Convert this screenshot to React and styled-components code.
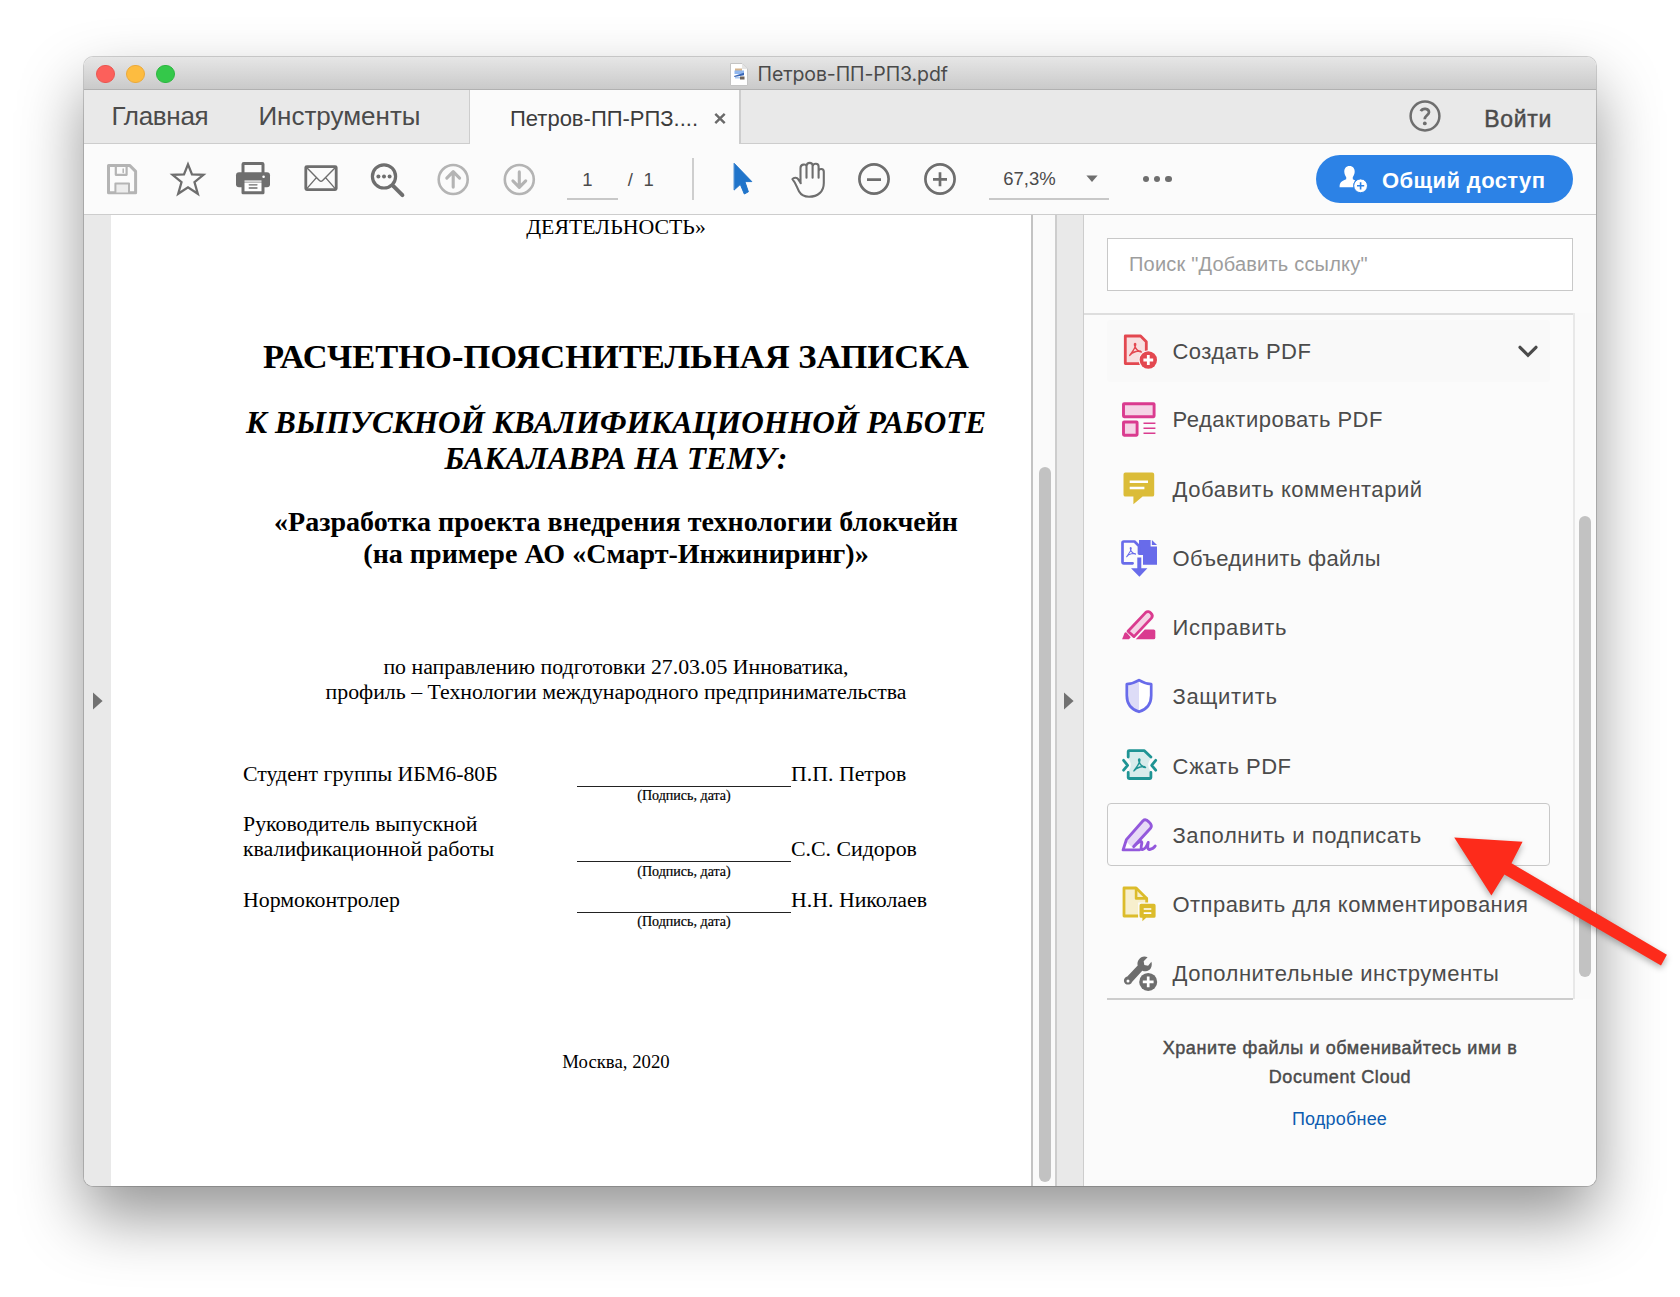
import React from 'react';
import styled, { createGlobalStyle, css } from 'styled-components';

const ink = '#4b4b4b';
const iconGray = '#6e6e6e';
const iconMuted = '#b4b4b4';
const hairline = '#cdcdcd';
const surface = '#fbfbfb';
const chrome = '#e9e9e9';

const GlobalStyle = createGlobalStyle`
  *, *::before, *::after { box-sizing: border-box; }
  html, body { margin: 0; padding: 0; background: #fff; }
  body {
    font-family: "Liberation Sans", Arial, sans-serif;
    color: ${ink};
    overflow: hidden;
  }
  svg { display: block; flex: none; overflow: visible; }
`;

const Desktop = styled.div`
  position: relative;
  width: 1680px;
  height: 1297px;
  padding: 57px 84px 0;
  background: #fff;
  overflow: hidden;
`;

const Window = styled.div`
  width: 1512px;
  height: 1129px;
  display: flex;
  flex-direction: column;
  border-radius: 9px;
  overflow: hidden;
  background: ${surface};
  box-shadow: 0 0 0 1px rgba(0, 0, 0, 0.17), 0 31px 64px rgba(0, 0, 0, 0.42);
`;

const TitleBar = styled.header`
  display: grid;
  grid-template-columns: 646px auto 1fr;
  align-items: center;
  height: 33px;
  flex: none;
  background: linear-gradient(#e6e6e6, #cacaca);
  border-bottom: 1px solid #b1b1b1;
`;

const Lights = styled.div`
  display: flex;
  gap: 11.4px;
  padding-left: 12px;
  padding-top: 1px;
`;

const Light = styled.span`
  width: 18.7px;
  height: 18.7px;
  border-radius: 50%;
  background: ${(p) => p.$fill};
  border: 1px solid ${(p) => p.$edge};
`;

const WindowTitle = styled.div`
  display: flex;
  align-items: center;
  gap: 9.5px;
  font: 400 19.5px/32px Inter, "Liberation Sans", sans-serif;
  letter-spacing: -0.1px;
  color: #4a4a4a;
  white-space: nowrap;
  padding-top: 1px;
`;

const TabBar = styled.nav`
  display: flex;
  flex: none;
  height: 54px;
  background: ${chrome};
`;

const MainTabs = styled.div`
  display: flex;
  width: 385px;
  gap: 50px;
  padding-left: 27.5px;
  border-bottom: 1px solid ${hairline};
  font-size: 26px;
  line-height: 53px;
`;

const MainTab = styled.span`
  white-space: nowrap;
  letter-spacing: ${(p) => p.$track}px;
`;

const FileTab = styled.div`
  display: flex;
  align-items: center;
  justify-content: space-between;
  width: 272px;
  padding: 4px 13px 0 40px;
  background: ${surface};
  border-left: 1px solid ${hairline};
  border-right: 2px solid ${hairline};
  font-size: 22px;
  color: #3c3c3c;
  white-space: nowrap;
`;

const TabTail = styled.div`
  flex: 1;
  display: flex;
  align-items: center;
  justify-content: flex-end;
  gap: 43px;
  padding: 0 44px 2px 0;
  border-bottom: 1px solid ${hairline};
`;

const SignIn = styled.span`
  font-size: 23px;
  letter-spacing: 0.7px;
  padding-top: 7px;
  -webkit-text-stroke: 0.45px currentColor;
`;

const Toolbar = styled.div`
  display: flex;
  align-items: center;
  flex: none;
  height: 71px;
  padding-left: 5px;
  padding-right: 23px;
  background: ${surface};
  border-bottom: 1px solid ${hairline};
`;

const Slots = styled.div`
  display: grid;
  grid-auto-flow: column;
  grid-auto-columns: ${(p) => p.$pitch}px;
  justify-items: center;
`;

const underlined = css`
  height: 42px;
  border-bottom: 2px solid #c8c8c8;
  line-height: 44.5px;
  font-size: 18.5px;
`;

const PageField = styled.div`
  ${underlined};
  width: 51px;
  margin-left: 15px;
  padding-left: 15px;
`;

const PageCount = styled.div`
  width: 65.5px;
  height: 42px;
  line-height: 44.5px;
  padding-left: 9.5px;
  font-size: 18.5px;
  word-spacing: 5.5px;
`;

const Separator = styled.div`
  width: 2px;
  height: 42px;
  margin: 0 16.5px 0 8px;
  background: #cecece;
`;

const ZoomField = styled.div`
  ${underlined};
  display: flex;
  align-items: center;
  justify-content: space-between;
  width: 120px;
  margin-left: 16.5px;
  padding: 0 11px 0 14px;
`;

const ZoomValue = styled.span`
  padding-top: 3px;
`;

const MoreDots = styled.div`
  display: flex;
  gap: 5px;
  margin-left: 33.5px;
`;

const Dot = styled.span`
  width: 6.4px;
  height: 6.4px;
  border-radius: 50%;
  background: ${iconGray};
`;

const ShareButton = styled.button`
  display: flex;
  align-items: center;
  gap: 14px;
  width: 257px;
  height: 48px;
  margin-left: auto;
  padding: 0 0 0 23px;
  border: 0;
  border-radius: 24px;
  background: #2c82e6;
  color: #fff;
  font: 700 22px/50px "Liberation Sans", Arial, sans-serif;
  letter-spacing: 0.4px;
  white-space: nowrap;
`;

const ShareLabel = styled.span`
  padding-top: 3px;
`;

const Body = styled.main`
  display: flex;
  flex: 1;
  min-height: 0;
`;

const PaneHandle = styled.div`
  display: flex;
  align-items: center;
  width: ${(p) => p.$w}px;
  padding-left: ${(p) => p.$pad}px;
  background: ${chrome};
  border-left: ${(p) => (p.$edges ? `2px solid ${hairline}` : '0')};
  border-right: ${(p) => (p.$edges ? `1px solid ${hairline}` : '0')};
`;

const Page = styled.article`
  width: 922px;
  flex: none;
  background: #fff;
  border-right: 2px solid #c3c3c3;
  color: #000;
  font-family: "Liberation Serif", "Times New Roman", serif;
  overflow: hidden;
`;

const Sheet = styled.div`
  width: 1010px;
  text-align: center;
`;

const Para = styled.p`
  margin: ${(p) => p.$top}px 0 0;
  font-size: ${(p) => p.$size}px;
  line-height: ${(p) => p.$line}px;
  font-weight: ${(p) => (p.$bold ? 700 : 400)};
  font-style: ${(p) => (p.$italic ? 'italic' : 'normal')};
  white-space: nowrap;
`;

const Signatures = styled.div`
  display: flex;
  flex-direction: column;
  gap: 8.6px;
  margin: 57px 0 0 132px;
  text-align: left;
  font-size: 21.83px;
  line-height: 25px;
  white-space: nowrap;
`;

const SignatureRow = styled.div`
  display: grid;
  grid-template-columns: 334px 214px auto;
  align-items: end;
`;

const SignLine = styled.span`
  align-self: end;
  border-bottom: 1px solid #222;
`;

const SignHint = styled.span`
  grid-column: 2;
  font-size: 14.05px;
  line-height: 16px;
  padding: 0.4px 0 0.6px;
  text-align: center;
  -webkit-text-stroke: 0.2px currentColor;
`;

const ScrollTrack = styled.div`
  flex: none;
  width: ${(p) => p.$w}px;
  padding: ${(p) => p.$from}px 0 0 ${(p) => p.$inset}px;
  background: #fafafa;
  border-left: ${(p) => (p.$line ? '2px solid #e8e8e8' : '0')};
`;

const ScrollThumb = styled.div`
  width: 12px;
  height: ${(p) => p.$h}px;
  border-radius: 6px;
  background: #c2c2c2;
`;

const ToolPane = styled.aside`
  display: flex;
  flex-direction: column;
  width: 512px;
  background: ${surface};
`;

const SearchBox = styled.div`
  height: 53px;
  margin: 23px 23px 22px 23px;
  padding-left: 21px;
  border: 1px solid #c8c8c8;
  background: #fff;
  color: #9d9d9d;
  font-size: 20px;
  line-height: 51px;
  letter-spacing: 0.2px;
  white-space: nowrap;
`;

const ToolArea = styled.div`
  display: flex;
  flex: none;
  height: 686px;
`;

const ToolList = styled.div`
  width: 489px;
  padding: 5px 0 0 23px;
  border-top: 2px solid #dedede;
  overflow: hidden;
`;

const ToolRow = styled.div`
  display: flex;
  align-items: center;
  width: 443px;
  height: 62.4px;
  margin-bottom: ${(p) => (p.$first ? 5.6 : 6.85)}px;
  padding: 0 10.5px 0 9px;
  border: 1px solid ${(p) => (p.$active ? '#c8c8c8' : 'transparent')};
  border-radius: 4px;
  background: ${(p) => (p.$first ? '#f9f9f9' : 'transparent')};
`;

const ToolName = styled.span`
  flex: 1;
  padding: 2.6px 0 0 11.5px;
  font-size: 22px;
  letter-spacing: ${(p) => p.$track}px;
  white-space: nowrap;
`;

const ListEnd = styled.div`
  flex: none;
  height: 1px;
  margin: -1px 23px 0 23px;
  border-top: 2px solid ${hairline};
`;

const Promo = styled.p`
  margin: 34px 0 0;
  text-align: center;
  font-size: 18px;
  line-height: 28.6px;
  letter-spacing: 0.6px;
  -webkit-text-stroke: 0.45px currentColor;
`;

const PromoLink = styled.a`
  margin: 13.5px 1px 0 0;
  text-align: center;
  font-size: 18px;
  line-height: 28px;
  letter-spacing: 0.2px;
  color: #0d5cb0;
`;

const Pointer = styled.svg`
  position: absolute;
  left: 1450px;
  top: 830px;
  filter: drop-shadow(0 3px 3px rgba(0, 0, 0, 0.3));
`;

const Glyph = ({ children, size = 44 }) => (
  <svg width={size} height={size} viewBox={`${-size / 2} ${-size / 2} ${size} ${size}`} fill="none" strokeLinecap="round" strokeLinejoin="round">
    {children}
  </svg>
);

const SaveIcon = () => (
  <Glyph>
    <path d="M-13.5-13.6H7.6l6 6V13.8H-13.5z" stroke={iconMuted} strokeWidth="3" />
    <path d="M-6.2-13V-4.2H4.6V-13" stroke={iconMuted} strokeWidth="2.2" />
    <path d="M1.2-10v3.4" stroke={iconMuted} strokeWidth="1.5" />
    <path d="M-6.6 13.6V4.4H7v9.2" stroke={iconMuted} strokeWidth="2" fill="#ececec" />
  </Glyph>
);

const StarIcon = () => (
  <Glyph>
    <path d="M0-14.6 4-4.6 15.4-4.2 6.5 3.2 9.8 14.8 0 8.3-9.8 14.8-6.5 3.2-15.4-4.2-4-4.6z" stroke={iconGray} strokeWidth="2.3" strokeLinejoin="miter" />
  </Glyph>
);

const PrintIcon = () => (
  <Glyph>
    <g transform="translate(-1 0)">
      <path d="M-10-6v-8.8q0-.7.7-.7H9.3q.7 0 .7.7V-6" stroke={iconGray} strokeWidth="3" />
      <rect x="-17" y="-6.8" width="34" height="15" rx="3" fill={iconGray} />
      <path d="M-10 2.4H10V13.8H-10z" fill="#fff" stroke={iconGray} strokeWidth="3" />
      <path d="M-8.5 2.5H8.5" stroke="#d8d8d8" strokeWidth="2.6" strokeLinecap="butt" />
      <path d="M-3.8 5.8H4M-3.8 9H4" stroke={iconGray} strokeWidth="1.3" />
      <circle cx="10.6" cy="-2.2" r="1.3" fill="#fff" />
    </g>
  </Glyph>
);

const MailIcon = () => (
  <Glyph>
    <g transform="translate(0 -.6)">
      <rect x="-15.2" y="-11.8" width="30.4" height="23" rx="1" stroke={iconGray} strokeWidth="2.8" />
      <path d="M-14.4-11-1.6 2Q0 3.6 1.6 2L14.4-11M-14.4 10.5-4.6-.8M14.4 10.5 4.6-.8" stroke={iconGray} strokeWidth="1.4" />
    </g>
  </Glyph>
);

const FindIcon = () => (
  <Glyph>
    <circle cx="-3" cy="-2.6" r="11.6" stroke={iconGray} strokeWidth="3.2" />
    <path d="m6.4 7.2 9 9" stroke={iconGray} strokeWidth="4" />
    <g fill={iconGray}>
      <circle cx="-8.6" cy="-2.6" r="2" />
      <circle cx="-3" cy="-2.6" r="2" />
      <circle cx="2.6" cy="-2.6" r="2" />
    </g>
  </Glyph>
);

const ArrowIcon = ({ down }) => (
  <Glyph>
    <g stroke={iconMuted} transform={down ? 'translate(.3 .5) scale(1 -1)' : 'translate(.2 .5)'}>
      <circle r="14.5" strokeWidth="2.6" />
      <path d="M0 7.6V-7.4M-6.4-1.4 0-7.8 6.4-1.4" strokeWidth="3.1" />
    </g>
  </Glyph>
);

const CursorIcon = () => (
  <Glyph>
    <path d="M-8.6-15.4 8.8 2.6H1.9L5.4 12.8 1.3 15-2.7 5.4-8.6 10.8z" fill="#2074ca" stroke="#2074ca" strokeWidth="1" />
  </Glyph>
);

const HandIcon = () => (
  <Glyph>
    <path
      transform="translate(-.6 .3)"
      d="M-7.6 3.8-10.3-.2C-11.6-2.2-14.8-1.6-16-.2-12.6 3.6-11.6 8-9.3 12.2-7 16.2-3.2 17.4.6 17.4 9.4 17.4 15.4 12.4 15.4 3.6V-7.6C15.4-11 10.6-11 10.2-8.2V-12.8C10.2-16.4 5-16.4 4.4-13.4 4-17.4-1.4-17.4-1.9-13.4-2.7-15.6-7.9-15.2-7.9-11.4V3.8M-1.9-13.4V-1.6M4.2-13.6V-1.6M10.2-8.4V-1.6"
      stroke={iconGray}
      strokeWidth="2.1"
    />
  </Glyph>
);

const ZoomIcon = ({ plus }) => (
  <Glyph>
    <circle r="14.6" stroke={iconGray} strokeWidth="2.7" />
    <path d={plus ? 'M-7 .3H7M0-6.7V7.3' : 'M-7 .6H7'} stroke={iconGray} strokeWidth="2.7" strokeLinecap="butt" />
  </Glyph>
);

const HelpIcon = () => (
  <Glyph size={32}>
    <circle r="14.4" stroke={iconGray} strokeWidth="2.5" />
    <path d="M-4.2-4.9C-2.6-8.2 4.1-8 4-3.7 3.9-.9-.3-.4-.3 3.2" stroke={iconGray} strokeWidth="2.7" strokeLinecap="butt" />
    <circle cx="-.2" cy="7.4" r="1.9" fill={iconGray} />
  </Glyph>
);

const PersonIcon = () => (
  <svg width="29" height="28" viewBox="0 0 29 28">
    <path transform="translate(0 .5)" d="M10.5.4C14 .4 16 3 15.7 6.6c-.2 2.4-1.2 4-1.9 5v2.2l2.4 1.2c-1.6 1.7-2.1 4-1.5 6.8H.6c0-5 1.4-5.6 6.6-8v-2.2C6.4 10.6 5.5 9 5.3 6.6 5 3 7 .4 10.5.4z" fill="#fff" />
    <circle cx="21.6" cy="20.8" r="6.9" fill="#fff" stroke="#2c82e6" strokeWidth="1" />
    <path d="M21.6 17.2V24.4M18 20.8h7.2" stroke="#2c82e6" strokeWidth="1.6" />
  </svg>
);

const FileIcon = () => (
  <svg width="18" height="23" viewBox="0 0 18 23">
    <path d="M.5.5H12L17.5 6V22.5H.5z" fill="#fff" stroke="#c4c4c4" />
    <path d="M12 .5V6h5.5z" fill="#e4e4e4" />
    <path d="M5 5.5H12V8H5z" fill="#d3b48e" />
    <path d="M4.5 7.5H14v3.5H4.5z" fill="#8fb6ee" />
    <path d="M4 13 14 9.8v2.4L4.5 14z" fill="#3865b5" />
    <path d="M5 14h6v1.6H5z" fill="#a9c8f2" />
    <path d="M10 13.6h4.5v3H10z" fill="#6e6259" />
  </svg>
);

const Acro = ({ color, x = 0, y = 0, k = 1 }) => (
  <path
    transform={`translate(${x} ${y}) scale(${k})`}
    d="M-6 6.3C-4.5 3.6 0-.6.3-5.2.4-7-1.3-6.8-1-4.8-.5-1.8 2.6 2.4 6.3 2.7 5 .6-3.6 2-6 6.3z"
    stroke={color}
    strokeWidth="1.5"
  />
);

const CreateIcon = () => (
  <Glyph>
    <path d="M-13.7-15H1.6L7.3-9.3V12.6H-13.7z" fill="#f8dfe0" stroke="#e34850" strokeWidth="2.8" />
    <Acro color="#e34850" x={-3.6} y={-1.5} k={0.95} />
    <circle cx="9.3" cy="9" r="9.7" fill={surface} />
    <circle cx="9.3" cy="9" r="8.7" fill="#e34850" />
    <path d="M4.4 9h9.8M9.3 4.1v9.8" stroke="#fff" strokeWidth="2.8" strokeLinecap="butt" />
  </Glyph>
);

const EditIcon = () => (
  <Glyph>
    <g fill="#f5d4e6" stroke="#da3b8f" strokeWidth="2.9">
      <rect x="-15.5" y="-15.3" width="30.6" height="13" rx=".6" />
      <rect x="-15.5" y="3" width="13.6" height="13.2" rx=".6" />
    </g>
    <path d="M4.5 4.2H16.4M4.5 9.2H16.4M4.5 14.2H16.4" stroke="#da3b8f" strokeWidth="1.5" strokeLinecap="butt" />
  </Glyph>
);

const CommentIcon = () => (
  <Glyph>
    <path d="M-13.6-15.5H13.3q1.9 0 1.9 1.9V6.7q0 1.9-1.9 1.9H3.6L-5.6 16.3V8.6H-13.6q-1.9 0-1.9-1.9V-13.6q0-1.9 1.9-1.9z" fill="#dbbc38" />
    <path d="M-9.3-6.2H9M-9.3 0H5.4" stroke="#fff" strokeWidth="2.6" strokeLinecap="butt" />
  </Glyph>
);

const CombineIcon = () => (
  <Glyph>
    <path d="M0-18H11.6V-11.6H18V6.7H4V-3H0z" fill="#686bea" />
    <path d="M12.9-18 18-12.9H12.9z" fill="#686bea" />
    <path d="M-6.4 5.3H-15.3q-1.2 0-1.2-1.2V-15.3q0-1.2 1.2-1.2H-4.5L0-12V-4.5" stroke="#686bea" strokeWidth="2.7" />
    <Acro color="#686bea" x={-8} y={-5.8} k={0.72} />
    <path d="M-3.2-1.8H4V8H9.5L.3 18.2-9 8h5.8z" fill={surface} />
    <path d="M-1.7-.4H2.3V10.2H8.4L.4 18.7-8 10.2h6.3z" fill="#686bea" />
  </Glyph>
);

const RedactIcon = () => (
  <Glyph>
    <path d="M5.8 2.6H14.6q1.7 0 1.7 1.5V10.8q0 1.5-1.7 1.5H-3.2z" fill="#da3b8f" />
    <path d="M-16.9 12.3-14.5 6Q-13.3 4.7-12 6L-8.3 10.3-10 12.3z" fill="#da3b8f" />
    <path d="M-11 4.3 6.6-14.4C8.4-16.2 10.4-15.4 11.8-14 13.3-12.5 13.9-10.6 12.4-8.9L-5 9.6z" fill="#f5d4e6" stroke="#da3b8f" strokeWidth="2.8" />
  </Glyph>
);

const ShieldIcon = () => (
  <Glyph>
    <path d="M0-15.8C4-13.2 8-12.2 12.2-11.8V-.5C12.2 8.2 7.6 13.4 0 15.8-7.6 13.4-12.2 8.2-12.2-.5V-11.8C-8-12.2-4-13.2 0-15.8z" fill="#fff" />
    <path d="M0-15.8V15.8C-7.6 13.4-12.2 8.2-12.2-.5V-11.8C-8-12.2-4-13.2 0-15.8z" fill="#dddcf7" />
    <path d="M0-15.8C4-13.2 8-12.2 12.2-11.8V-.5C12.2 8.2 7.6 13.4 0 15.8-7.6 13.4-12.2 8.2-12.2-.5V-11.8C-8-12.2-4-13.2 0-15.8z" stroke="#686bea" strokeWidth="2.7" />
  </Glyph>
);

const CompressIcon = () => (
  <Glyph>
    <path d="M-10.8-6.8V-14.3H5.4L11.9-8V-6.8Q6.4 0 11.9 6.5V13.5H-10.8V6.5Q-5.4 0-10.8-6.8z" fill="#d8ecec" />
    <path d="M-10.8-8V-13.4q0-.9.9-.9H5.4L11.9-8M-10.8 7.5V12.6q0 .9.9.9H11q.9 0 .9-.9V7.5M-15.4-4.7-11.4.3-15.4 5.2M16.7-4.7 12.7.3l4 4.9" stroke="#1f9494" strokeWidth="2.8" />
    <Acro color="#1f9494" x={0.6} y={0} k={0.95} />
  </Glyph>
);

const SignIcon = () => (
  <Glyph>
    <path d="M-15.8 14.8-12.6 4.6 4-14.2Q6.6-17 9.9-13.8 14-10.2 11.9-7.4L-5.3 11.6z" fill="#e7daf6" />
    <path d="M-13.4 6-15.8 14.8-6.6 12.4z" fill="#fff" />
    <path
      d="M-5.3 11.6 11.7-7Q13.6-9.6 10-13 6.6-16.6 4-14.2L-12.6 4.6-15.9 14.9H.5M-5.3 11.6-2 8.4C.8 5.7 3.7 5.6 2.6 9.4 1.8 12.3 1.8 14.9 4 14.4 6.7 13.7 8.3 10 9.2 7.4 8.5 11.2 8.3 14.9 10.7 14.5 13 14.1 15.2 12.6 16.2 11"
      stroke="#9358dc"
      strokeWidth="2.9"
    />
  </Glyph>
);

const SendIcon = () => (
  <Glyph>
    <path d="M-15-16H-2.9L7.7-5.6V12H-15z" fill="#f7efcd" stroke="#dcbc2b" strokeWidth="2.8" />
    <path d="M-2.9-15.4V-5.6H7.4" stroke="#dcbc2b" strokeWidth="2.6" />
    <path d="M-.9-1.5H18.2V15.2H-.9z" fill={surface} />
    <path d="M2.1-.2H15q1.6 0 1.6 1.6V12.2q0 1.5-1.6 1.5H7.2L3.4 17.3V13.7H2.1q-1.6 0-1.6-1.5V1.4q0-1.6 1.6-1.6z" fill="#dcbc2b" />
    <path d="M4.7 5h7.6M4.7 9.2h7.6" stroke="#fff" strokeWidth="1.7" strokeLinecap="butt" />
  </Glyph>
);

const WrenchIcon = () => (
  <Glyph>
    <path d="M8.6-15.8 4.7-11.7 5.3-8 9.1-7.3 12.4-11.2C13.8-6.7 11.4-1.8 6.6-1.7 5.3-1.7 4.3-1.9 3.3-2.3L-7 8.9C-8.3 12.7-14.6 12.6-15.1 8-15.2 5.4-13.5 4-11.7 3.5L-1.3-7.4C-2.7-12.8 2.6-18.6 8.6-15.8z" fill={iconGray} />
    <circle cx="-11" cy="8" r="1.5" fill="#fff" />
    <circle cx="9.2" cy="8.9" r="10" fill={surface} />
    <circle cx="9.2" cy="8.9" r="9" fill={iconGray} />
    <path d="M3.8 8.9h10.8M9.2 3.5v10.8" stroke="#fff" strokeWidth="2.7" strokeLinecap="butt" />
  </Glyph>
);

const Chevron = () => (
  <svg width="22" height="14" viewBox="0 0 22 14">
    <path d="M3 3.3 11 11.3 19 3.3" fill="none" stroke={ink} strokeWidth="3.2" strokeLinecap="round" />
  </svg>
);

const HandleArrow = () => (
  <svg width="10" height="17" viewBox="0 0 10 17">
    <path d="M0 .5 9.6 9 0 17.5z" fill="#717171" />
  </svg>
);

const tools = [
  { name: 'Создать PDF', icon: CreateIcon, track: 0.47, expandable: true },
  { name: 'Редактировать PDF', icon: EditIcon, track: 0.49 },
  { name: 'Добавить комментарий', icon: CommentIcon, track: 0.56 },
  { name: 'Объединить файлы', icon: CombineIcon, track: 0.34 },
  { name: 'Исправить', icon: RedactIcon, track: 0.66 },
  { name: 'Защитить', icon: ShieldIcon, track: 0.66 },
  { name: 'Сжать PDF', icon: CompressIcon, track: 0.5 },
  { name: 'Заполнить и подписать', icon: SignIcon, track: 0.56, active: true },
  { name: 'Отправить для комментирования', icon: SendIcon, track: 0.46 },
  { name: 'Дополнительные инструменты', icon: WrenchIcon, track: 0.5 },
];

const signatures = [
  { role: ['Студент группы ИБМ6-80Б'], person: 'П.П. Петров' },
  { role: ['Руководитель выпускной', 'квалификационной работы'], person: 'С.С. Сидоров' },
  { role: ['Нормоконтролер'], person: 'Н.Н. Николаев' },
];

export default function App() {
  return (
    <>
      <GlobalStyle />
      <Desktop>
        <Window>
          <TitleBar>
            <Lights>
              <Light $fill="#fc605b" $edge="#ea5550" />
              <Light $fill="#fdbc40" $edge="#eba93a" />
              <Light $fill="#34c84a" $edge="#2bb63f" />
            </Lights>
            <WindowTitle>
              <FileIcon />
              Петров-ПП-РПЗ.pdf
            </WindowTitle>
          </TitleBar>

          <TabBar>
            <MainTabs>
              <MainTab $track={-0.3}>Главная</MainTab>
              <MainTab $track={0}>Инструменты</MainTab>
            </MainTabs>
            <FileTab>
              Петров-ПП-РПЗ....
              <svg width="12" height="12" viewBox="0 0 12 12">
                <path d="M1.3.8 10.7 10.2M10.7.8 1.3 10.2" stroke="#6a6a6a" strokeWidth="2.4" />
              </svg>
            </FileTab>
            <TabTail>
              <HelpIcon />
              <SignIn>Войти</SignIn>
            </TabTail>
          </TabBar>

          <Toolbar>
            <Slots $pitch={66.2}>
              <SaveIcon />
              <StarIcon />
              <PrintIcon />
              <MailIcon />
              <FindIcon />
              <ArrowIcon />
              <ArrowIcon down />
            </Slots>
            <PageField>1</PageField>
            <PageCount>/ 1</PageCount>
            <Separator />
            <Slots $pitch={65.6}>
              <CursorIcon />
              <HandIcon />
              <ZoomIcon />
              <ZoomIcon plus />
            </Slots>
            <ZoomField>
              <ZoomValue>67,3%</ZoomValue>
              <svg width="12" height="7" viewBox="0 0 12 7">
                <path d="M.4.6H11.600L6 7z" fill={iconGray} />
              </svg>
            </ZoomField>
            <MoreDots>
              <Dot />
              <Dot />
              <Dot />
            </MoreDots>
            <ShareButton>
              <PersonIcon />
              <ShareLabel>Общий доступ</ShareLabel>
            </ShareButton>
          </Toolbar>

          <Body>
            <PaneHandle $w={27} $pad={9}>
              <HandleArrow />
            </PaneHandle>
            <Page>
              <Sheet>
                <Para $top={1} $size={21.83} $line={23}>ДЕЯТЕЛЬНОСТЬ»</Para>
                <Para $top={97} $size={34.5} $line={40} $bold>РАСЧЕТНО-ПОЯСНИТЕЛЬНАЯ ЗАПИСКА</Para>
                <Para $top={29.3} $size={31.2} $line={35.5} $bold $italic>
                  К ВЫПУСКНОЙ КВАЛИФИКАЦИОННОЙ РАБОТЕ
                  <br />
                  БАКАЛАВРА НА ТЕМУ:
                </Para>
                <Para $top={29.5} $size={28.07} $line={31.8} $bold>
                  «Разработка проекта внедрения технологии блокчейн
                  <br />
                  (на примере АО «Смарт-Инжиниринг)»
                </Para>
                <Para $top={85.4} $size={21.83} $line={25}>
                  по направлению подготовки 27.03.05 Инноватика,
                  <br />
                  профиль – Технологии международного предпринимательства
                </Para>
                <Signatures>
                  {signatures.map(({ role, person }) => (
                    <SignatureRow key={person}>
                      <span>
                        {role.map((line, i) => (
                          <React.Fragment key={line}>
                            {i > 0 && <br />}
                            {line}
                          </React.Fragment>
                        ))}
                      </span>
                      <SignLine />
                      <span>{person}</span>
                      <SignHint>(Подпись, дата)</SignHint>
                    </SignatureRow>
                  ))}
                </Signatures>
                <Para $top={121} $size={18.75} $line={22}>Москва, 2020</Para>
              </Sheet>
            </Page>
            <ScrollTrack $w={22} $from={252} $inset={6}>
              <ScrollThumb $h={715} />
            </ScrollTrack>
            <PaneHandle $w={29} $pad={7} $edges>
              <HandleArrow />
            </PaneHandle>

            <ToolPane>
              <SearchBox>Поиск "Добавить ссылку"</SearchBox>
              <ToolArea>
                <ToolList>
                  {tools.map(({ name, icon: Icon, track, active, expandable }) => (
                    <ToolRow key={name} $active={active} $first={expandable}>
                      <Icon />
                      <ToolName $track={track}>{name}</ToolName>
                      {expandable && <Chevron />}
                    </ToolRow>
                  ))}
                </ToolList>
                <ScrollTrack $w={21} $from={203} $inset={4} $line>
                  <ScrollThumb $h={461} />
                </ScrollTrack>
              </ToolArea>
              <ListEnd />
              <Promo>
                Храните файлы и обменивайтесь ими в
                <br />
                Document Cloud
              </Promo>
              <PromoLink>Подробнее</PromoLink>
            </ToolPane>
          </Body>
        </Window>

        <Pointer width="225" height="150" viewBox="1450 830 225 150">
          <path d="M1454.2 837.5 1522.6 841.8 1511.5 863.3 1666.9 954.7 1661 965.5 1504.4 874.5 1491.4 895.5z" fill="#fd2b1b" />
        </Pointer>
      </Desktop>
    </>
  );
}
